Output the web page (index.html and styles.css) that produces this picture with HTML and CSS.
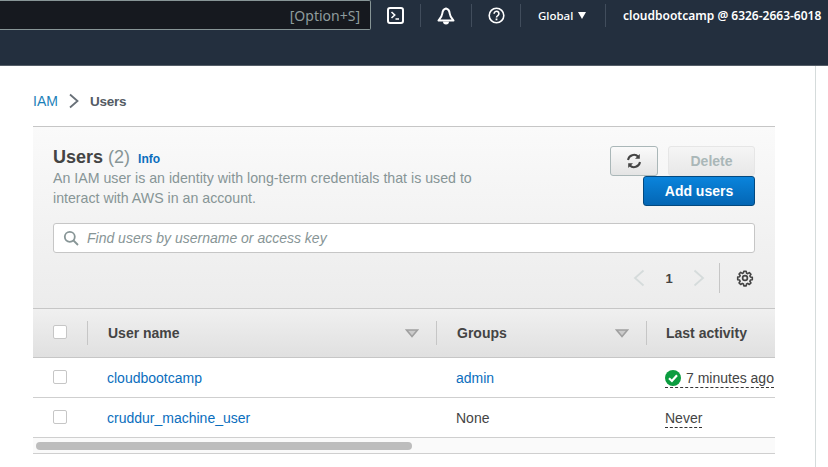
FILE: index.html
```html
<!DOCTYPE html>
<html lang="en">
<head>
    <meta charset="UTF-8">
    <title>Users | IAM</title>
    <link rel="stylesheet" href="styles.css">
</head>
<body>
    <header class="topbar">
        <div class="search-box">[Option+S]</div>
        <div class="nav-item nav-shell">
            <svg width="17" height="17" viewBox="0 0 17 17"><rect x="1" y="1" width="15" height="15" rx="2" fill="none" stroke="#fff" stroke-width="2"/><path d="M4.500 5l3.200 3-3.200 3M8.500 12h3.500" fill="none" stroke="#fff" stroke-width="1.600"/></svg>
        </div>
        <div class="nav-item nav-bell">
            <svg width="18" height="18" viewBox="0 0 18 18"><path d="M9 1.500C6.600 2 5.600 4 5.300 6.500C5 9.500 3.500 11 1.500 13.500h15c-2-2.500-3.500-4-3.800-7C12.400 4 11.400 2 9 1.500z" fill="none" stroke="#fff" stroke-width="2" stroke-linejoin="round"/><path d="M6 14.500a3 3 0 0 0 6 0z" fill="#fff"/></svg>
        </div>
        <div class="nav-item nav-help">
            <svg width="17" height="17" viewBox="0 0 17 17"><circle cx="8.500" cy="8.500" r="7.300" fill="none" stroke="#fff" stroke-width="1.600"/><path d="M6.100 6.700a2.400 2.400 0 1 1 3.700 2c-.9.600-1.300 1-1.300 1.900" fill="none" stroke="#fff" stroke-width="1.600"/><rect x="7.600" y="11.500" width="1.800" height="1.800" fill="#fff"/></svg>
        </div>
        <div class="nav-item nav-region">Global <span class="caret"></span></div>
        <div class="nav-item nav-account">cloudbootcamp @ 6326-2663-6018</div>
    </header>

    <div class="page">
        <main class="content">
            <nav class="crumbs">
                <a href="#">IAM</a>
                <svg width="10" height="16" viewBox="0 0 10 16"><path d="M1 1.500L8.500 8 1 14.500" fill="none" stroke="#687078" stroke-width="1.800"/></svg>
                <span class="crumb-current">Users</span>
            </nav>

            <section class="panel">
                <div class="panel-head">
                    <div class="title-row">
                        <div class="title-text">
                            <h1>Users <span class="count">(2)</span> <a class="info" href="#">Info</a></h1>
                            <p>An IAM user is an identity with long-term credentials that is used to<br>interact with AWS in an account.</p>
                        </div>
                        <div class="actions">
                            <div class="actions-top">
                                <button class="btn btn-icon" type="button">
                                    <svg width="16" height="16" viewBox="0 0 16 16"><path d="M2 7a6 6 0 0 1 10.300-3.200M14 9a6 6 0 0 1-10.300 3.200" fill="none" stroke="#444" stroke-width="2"/><path d="M13.800 1v4.800H9zM2.200 15v-4.800H7z" fill="#444"/></svg>
                                </button>
                                <button class="btn btn-off" type="button">Delete</button>
                            </div>
                            <button class="btn btn-primary" type="button">Add users</button>
                        </div>
                    </div>
                    <div class="filter">
                        <svg width="16" height="16" viewBox="0 0 16 16"><circle cx="6.800" cy="6.800" r="5" fill="none" stroke="#879596" stroke-width="1.800"/><path d="M10.500 10.500L15 15" stroke="#879596" stroke-width="1.800"/></svg>
                        <span>Find users by username or access key</span>
                    </div>
                    <div class="pager">
                        <svg width="12" height="18" viewBox="0 0 12 18"><path d="M10.500 1.500L2 9l8.500 7.500" fill="none" stroke="#d5dbdb" stroke-width="1.800"/></svg>
                        <span class="page-num">1</span>
                        <svg width="12" height="18" viewBox="0 0 12 18"><path d="M1.500 1.500L10 9l-8.500 7.500" fill="none" stroke="#d5dbdb" stroke-width="1.800"/></svg>
                        <span class="pager-sep"></span>
                        <svg class="gear" width="18" height="18" viewBox="0 0 18 18"><circle cx="9" cy="9" r="2.400" fill="none" stroke="#444" stroke-width="1.700"/><path d="M7.700 1.500h2.600l.4 2.100 1.300.6 1.800-1.200 1.800 1.800-1.200 1.800.6 1.300 2.100.4v2.600l-2.100.4-.6 1.300 1.200 1.800-1.800 1.800-1.800-1.200-1.300.6-.4 2.100H7.700l-.4-2.100-1.300-.6-1.800 1.200-1.800-1.800 1.200-1.800-.6-1.300-2.100-.4V8l2.100-.4.6-1.300-1.200-1.800 1.800-1.800L6 3.900l1.300-.6z" transform="translate(.9 .9) scale(.9)" fill="none" stroke="#444" stroke-width="1.800" stroke-linejoin="round"/></svg>
                    </div>
                </div>

                <div class="table">
                    <div class="row row-head">
                        <div class="cell cell-check"><span class="check"></span></div>
                        <div class="cell cell-sort"><span class="th">User name</span><svg class="sort" width="14" height="9" viewBox="0 0 14 9"><path d="M1.500 1h11L7 7.500z" fill="#cbcbcb" stroke="#a0a0a0" stroke-width="1.600"/></svg></div>
                        <div class="cell cell-sort"><span class="th">Groups</span><svg class="sort" width="14" height="9" viewBox="0 0 14 9"><path d="M1.500 1h11L7 7.500z" fill="#cbcbcb" stroke="#a0a0a0" stroke-width="1.600"/></svg></div>
                        <div class="cell cell-last"><span class="th">Last activity</span></div>
                    </div>
                    <div class="row">
                        <div class="cell cell-check"><span class="check"></span></div>
                        <div class="cell"><a href="#">cloudbootcamp</a></div>
                        <div class="cell"><a href="#">admin</a></div>
                        <div class="cell cell-last">
                            <span class="activity">
                                <svg width="16" height="16" viewBox="0 0 16 16"><circle cx="8" cy="8" r="8" fill="#0b9c3f"/><path d="M4 8.300l2.900 2.700L12 5.300" fill="none" stroke="#fff" stroke-width="2.200"/></svg>
                                7 minutes ago
                            </span>
                        </div>
                    </div>
                    <div class="row">
                        <div class="cell cell-check"><span class="check"></span></div>
                        <div class="cell"><a href="#">cruddur_machine_user</a></div>
                        <div class="cell">None</div>
                        <div class="cell cell-last"><span class="activity">Never</span></div>
                    </div>
                </div>
                <div class="scroll"><div class="thumb"></div></div>
            </section>
        </main>
    </div>
</body>
</html>
```

FILE: styles.css
```css
* {
    box-sizing: border-box;
}
html, body {
    height: 100%;
}
body {
    margin: 0;
    overflow: hidden;
    background-color: #fff;
    font-family: 'Liberation Sans', Arial, sans-serif;
    font-size: 14px;
    color: #444;
}
a {
    color: #0a6ebd;
    text-decoration: none;
}

/* top console bar */
.topbar {
    display: flex;
    align-items: flex-start;
    height: 66px;
    background-color: #232f3e;
    border-bottom: 1px solid #555e68;
    font-family: 'Noto Sans', 'Open Sans', sans-serif;
    color: #fff;
}
.search-box {
    flex: none;
    width: 371px;
    height: 30px;
    padding: 0 10px 0 0;
    background-color: #16191f;
    border: 1px solid #879596;
    border-left: 0;
    border-radius: 0 2px 2px 0;
    text-align: right;
    font-size: 14px;
    line-height: 29px;
    color: #8f9c9d;
}
.nav-item {
    display: flex;
    align-items: center;
    height: 23px;
    margin-top: 4px;
    font-size: 11.5px;
    font-weight: 500;
}
.nav-shell {
    width: 50px;
    padding-left: 16px;
    border-right: 1px solid #414d5c;
}
.nav-bell {
    width: 51px;
    padding-left: 16px;
    border-right: 1px solid #414d5c;
}
.nav-help {
    width: 49px;
    padding-left: 16px;
    border-right: 1px solid #414d5c;
}
.nav-region {
    width: 85px;
    padding-left: 17px;
    border-right: 1px solid #414d5c;
}
.caret {
    width: 0;
    height: 0;
    margin-left: 5px;
    border-left: 4.5px solid transparent;
    border-right: 4.5px solid transparent;
    border-top: 7px solid #fff;
}
.nav-account {
    padding-left: 17px;
    font-size: 12px;
    font-weight: 600;
    white-space: nowrap;
}

/* page body */
.page {
    height: 401px;
    width: 816px;
    padding-left: 33px;
    border-right: 1px solid #d5dbdb;
}
.content {
    width: 742px;
}
.crumbs {
    display: flex;
    align-items: center;
    gap: 11px;
    height: 61px;
    padding-top: 10px;
    border-bottom: 1px solid #c6c6c6;
}
.crumbs a {
    color: #1a7fb8;
}
.crumb-current {
    font-size: 13.5px;
    font-weight: 700;
    letter-spacing: -.2px;
    color: #545b64;
}

.panel-head {
    height: 182px;
    padding: 19px 20px 0;
    background: linear-gradient(#fafafa, #ececec);
    border-bottom: 1px solid #c6c6c6;
}
.title-row {
    display: flex;
    justify-content: space-between;
    height: 77px;
}
h1 {
    margin: 0;
    font-size: 18px;
    line-height: 22px;
    font-weight: 700;
    color: #444;
}
.count {
    font-weight: 400;
    color: #879596;
}
.info {
    margin-left: 3px;
    font-size: 12px;
    color: #0a6ebd;
}
.title-text p {
    margin: -2px 0 0;
    font-size: 14.2px;
    line-height: 20px;
    color: #879596;
}
.actions {
    display: flex;
    flex-direction: column;
    align-items: flex-end;
}
.actions-top {
    display: flex;
    gap: 10px;
}
.btn {
    height: 30px;
    padding: 0;
    border-radius: 3px;
    font-family: inherit;
    font-size: 14px;
    font-weight: 700;
}
.btn-icon {
    display: flex;
    align-items: center;
    justify-content: center;
    width: 48px;
    background: linear-gradient(#fafafa, #e4e4e4);
    border: 1px solid #aab7b8;
}
.btn-off {
    width: 87px;
    background: linear-gradient(#f5f5f5, #e8e8e8);
    border: 1px solid #e6e6e6;
    color: #aab7b8;
}
.btn-primary {
    width: 112px;
    background: linear-gradient(#0a84dc, #0466b4);
    border: 1px solid #03497f;
    color: #fff;
}
.filter {
    display: flex;
    align-items: center;
    gap: 8px;
    height: 30px;
    padding-left: 9px;
    background-color: #fff;
    border: 1px solid #c6c6c6;
    border-radius: 3px;
    font-style: italic;
    color: #879596;
}
.pager {
    display: flex;
    align-items: center;
    justify-content: flex-end;
    height: 30px;
    margin-top: 10px;
}
.page-num {
    width: 48px;
    text-align: center;
    font-weight: 700;
    font-size: 13px;
}
.pager-sep {
    width: 1px;
    height: 30px;
    margin: 0 16px 0 14px;
    background-color: #c6c6c6;
}
.gear {
    margin-right: 1px;
}

.table {
    overflow: hidden;
}
.row {
    display: grid;
    grid-template-columns: 54px 349px 210px 150px;
    height: 40px;
    border-bottom: 1px solid #cfcfcf;
}
.row-head {
    height: 49px;
    background: linear-gradient(#f0f0f0, #e0e0e0);
    border-bottom-color: #c6c6c6;
}
.cell {
    display: flex;
    align-items: center;
    padding-left: 20px;
    white-space: nowrap;
}
.cell-check {
    align-items: flex-start;
    padding-top: 12px;
}
.row-head .cell {
    justify-content: space-between;
}
.row-head .cell-check {
    justify-content: flex-start;
    padding-top: 16px;
}
.row-head .cell + .cell {
    border-left: 1px solid #c6c6c6;
    height: 24px;
    margin-top: 12px;
}
.cell-last,
.row-head .cell-last {
    padding-left: 19px;
}
.th {
    font-weight: 700;
    color: #444;
}
.sort {
    margin-right: 17px;
}
.check {
    display: block;
    width: 14px;
    height: 14px;
    background-color: #fff;
    border: 1px solid #c6c6c6;
    border-radius: 2px;
}
.activity {
    display: flex;
    align-items: center;
    gap: 5px;
    margin-top: 2px;
    padding-bottom: 1px;
    border-bottom: 1px dashed #333;
}
.scroll {
    height: 16px;
    padding: 4px 3px;
    background-color: #fafafa;
    border-bottom: 1px solid #cfcfcf;
}
.thumb {
    width: 376px;
    height: 8px;
    background-color: #bdbdbd;
    border-radius: 4px;
}
```
